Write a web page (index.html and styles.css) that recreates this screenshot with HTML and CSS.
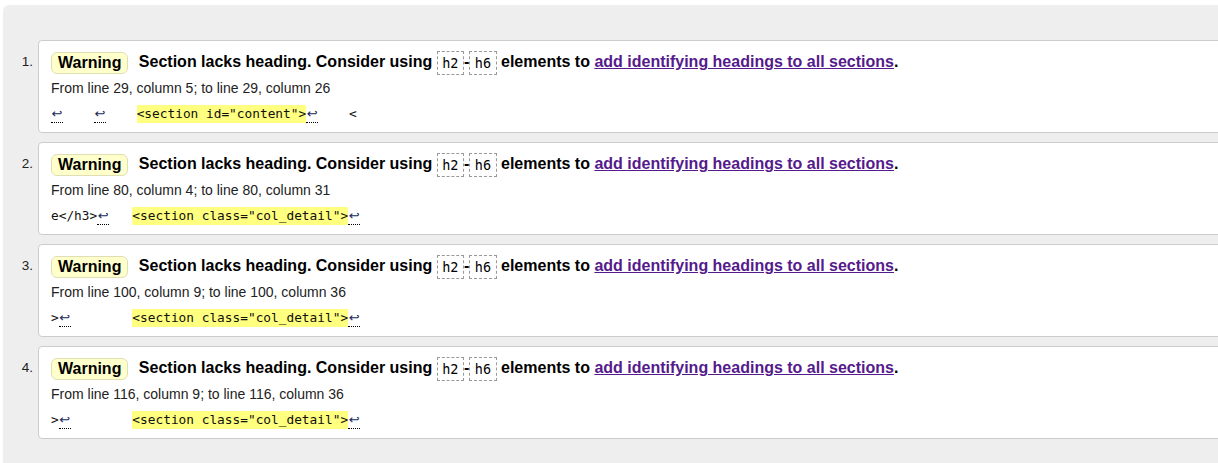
FILE: index.html
```html
<!DOCTYPE html>
<html lang="en">
<head>
<meta charset="utf-8">
<title>Warnings</title>
<link rel="stylesheet" href="styles.css">
</head>
<body>
<div class="panel">
  <ol class="msgs">
    <li class="msg">
      <span class="num">1.</span>
      <div class="card">
        <p class="title"><strong class="pill">Warning</strong> <span>Section lacks heading. Consider using <code class="tag">h2</code>-<code class="tag">h6</code> elements to <a href="#">add identifying headings to all sections</a>.</span></p>
        <p class="loc">From line 29, column 5; to line 29, column 26</p>
        <p class="extract"><code><span class="lf">↩</span>    <span class="lf">↩</span>    <b>&lt;section id="content"&gt;</b><span class="lf">↩</span>    &lt;</code></p>
      </div>
    </li>
    <li class="msg">
      <span class="num">2.</span>
      <div class="card">
        <p class="title"><strong class="pill">Warning</strong> <span>Section lacks heading. Consider using <code class="tag">h2</code>-<code class="tag">h6</code> elements to <a href="#">add identifying headings to all sections</a>.</span></p>
        <p class="loc">From line 80, column 4; to line 80, column 31</p>
        <p class="extract"><code>e&lt;/h3&gt;<span class="lf">↩</span>   <b>&lt;section class="col_detail"&gt;</b><span class="lf">↩</span></code></p>
      </div>
    </li>
    <li class="msg">
      <span class="num">3.</span>
      <div class="card">
        <p class="title"><strong class="pill">Warning</strong> <span>Section lacks heading. Consider using <code class="tag">h2</code>-<code class="tag">h6</code> elements to <a href="#">add identifying headings to all sections</a>.</span></p>
        <p class="loc">From line 100, column 9; to line 100, column 36</p>
        <p class="extract"><code>&gt;<span class="lf">↩</span>        <b>&lt;section class="col_detail"&gt;</b><span class="lf">↩</span></code></p>
      </div>
    </li>
    <li class="msg">
      <span class="num">4.</span>
      <div class="card">
        <p class="title"><strong class="pill">Warning</strong> <span>Section lacks heading. Consider using <code class="tag">h2</code>-<code class="tag">h6</code> elements to <a href="#">add identifying headings to all sections</a>.</span></p>
        <p class="loc">From line 116, column 9; to line 116, column 36</p>
        <p class="extract"><code>&gt;<span class="lf">↩</span>        <b>&lt;section class="col_detail"&gt;</b><span class="lf">↩</span></code></p>
      </div>
    </li>
  </ol>
</div>
</body>
</html>
```
FILE: styles.css
```css
html, body {
  margin: 0;
  padding: 0;
  background: #fff;
  overflow: hidden;
}
body {
  font-family: "Liberation Sans", Arial, sans-serif;
  color: #000;
}
.panel {
  margin: 5px 0 0 3px;
  width: 1215px;
  height: 423px;
  overflow: hidden;
  background: #eee;
  border-radius: 6px 0 0 0;
  padding-top: 35px;
}
.msgs {
  list-style: none;
  margin: 0 -12px 0 0;
  padding: 0;
}
.msg {
  display: grid;
  grid-template-columns: 35px 1fr;
  margin-bottom: 9px;
}
.num {
  text-align: right;
  padding-right: 5px;
  margin-top: 10px;
  line-height: 24px;
  font-size: 13.5px;
  color: #222;
}
.card {
  background: #fff;
  border: 1px solid #ccc;
  border-radius: 4px;
  padding: 9px 12px 10px;
}
.card p {
  margin: 0;
}
.title {
  height: 24px;
  line-height: 24px;
  font-size: 16px;
  font-weight: bold;
  white-space: nowrap;
}
.title > * {
  vertical-align: middle;
}
.pill {
  display: inline-block;
  line-height: 20px;
  padding: 0 6px;
  border: 1px solid #e0dfb4;
  border-radius: 6px;
  background: #ffffcc;
  margin-right: 6px;
}
.tag {
  display: inline-block;
  font-family: "DejaVu Sans Mono", monospace;
  font-weight: normal;
  font-size: 13.5px;
  line-height: 22px;
  padding: 0 4.5px;
  border: 1px dashed #999;
  vertical-align: middle;
}
.title a {
  color: #551a8b;
  text-decoration: underline;
}
.loc {
  margin-top: 6px !important;
  font-size: 14px;
  line-height: 16px;
  color: #222;
}
.extract {
  margin-top: 8px !important;
  height: 18px;
  line-height: 18px;
}
.extract code {
  font-family: "DejaVu Sans Mono", monospace;
  font-size: 12.8px;
  white-space: pre;
  color: #111;
}
.extract b {
  display: inline-block;
  font-weight: normal;
  background: #ffff80;
  line-height: 18px;
}
.lf {
  display: inline-block;
  width: 12px;
  text-align: center;
  line-height: 16px;
  font-family: "DejaVu Sans", sans-serif;
  font-size: 13px;
  color: #1a2a5a;
  border-bottom: 1px dotted #000;
}
```
